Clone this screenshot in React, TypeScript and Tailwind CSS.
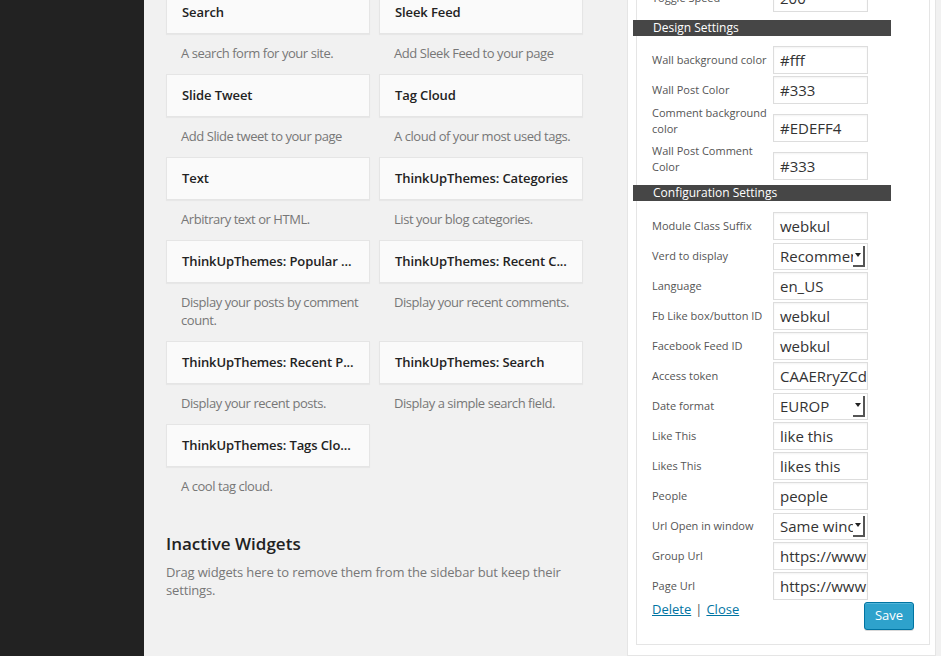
import React from "react";

type W = { t: string; d: string };
const rows: W[][] = [
  [
    { t: "Search", d: "A search form for your site." },
    { t: "Sleek Feed", d: "Add Sleek Feed to your page" },
  ],
  [
    { t: "Slide Tweet", d: "Add Slide tweet to your page" },
    { t: "Tag Cloud", d: "A cloud of your most used tags." },
  ],
  [
    { t: "Text", d: "Arbitrary text or HTML." },
    { t: "ThinkUpThemes: Categories", d: "List your blog categories." },
  ],
  [
    { t: "ThinkUpThemes: Popular ...", d: "Display your posts by comment count." },
    { t: "ThinkUpThemes: Recent C...", d: "Display your recent comments." },
  ],
  [
    { t: "ThinkUpThemes: Recent P...", d: "Display your recent posts." },
    { t: "ThinkUpThemes: Search", d: "Display a simple search field." },
  ],
  [{ t: "ThinkUpThemes: Tags Clo...", d: "A cool tag cloud." }],
];

function Widget({ w }: { w: W }) {
  return (
    <div>
      <div className="h-[43px] flex items-center px-[15px] bg-[#fafafa] border border-[#e5e5e5] shadow-[0_1px_1px_rgba(0,0,0,0.04)] text-[13px] font-semibold tracking-[-0.1px] text-[#222] whitespace-nowrap overflow-hidden">
        {w.t}
      </div>
      <div className="pt-[10px] pb-[12px] pl-[15px] pr-[8px] text-[13px] leading-[18px] tracking-[-0.45px] text-[#777]">
        {w.d}
      </div>
    </div>
  );
}

function Input({ v }: { v: string }) {
  return (
    <div className="w-[95px] h-[28px] border border-[#ddd] bg-white pl-[6px] flex items-center text-[15px] text-[#333] overflow-hidden whitespace-nowrap shadow-[inset_0_1px_2px_rgba(0,0,0,0.05)]">
      {v}
    </div>
  );
}

function Select({ v }: { v: string }) {
  return (
    <div className="relative w-[95px] h-[27px] border border-[#ddd] bg-white pl-[6px] flex items-center text-[15px] text-[#333] overflow-hidden whitespace-nowrap">
      <span className="block w-[80px] overflow-hidden">{v}</span>
      <div className="absolute right-[2px] top-[2px] w-[12px] h-[21px] bg-white border-r-2 border-b-2 border-[#555] flex justify-center pt-[7px]">
        <svg width="6" height="4" viewBox="0 0 6 4">
          <path d="M0 0 L6 0 L3 4 Z" fill="#222" />
        </svg>
      </div>
    </div>
  );
}

function Row({ label, children }: { label: string; children: React.ReactNode }) {
  return (
    <div className="h-[30px] flex items-center">
      <div className="w-[121px] text-[11px] text-[#555] whitespace-nowrap">{label}</div>
      {children}
    </div>
  );
}

function Row2({ label, v }: { label: React.ReactNode; v: string }) {
  return (
    <div className="h-[38px] flex items-start">
      <div className="w-[121px] text-[11px] leading-[16px] text-[#555]">{label}</div>
      <div className="mt-[9px]">
        <Input v={v} />
      </div>
    </div>
  );
}

function Bar({ t, className }: { t: string; className?: string }) {
  return (
    <div
      className={
        "ml-[-19px] w-[258px] h-[16px] bg-[#464646] text-white text-[12px] leading-[16px] pl-[20px] " +
        (className ?? "")
      }
    >
      {t}
    </div>
  );
}

export default function App() {
  return (
    <div
      className="w-[941px] h-[656px] overflow-hidden flex bg-[#f1f1f1]"
      style={{ fontFamily: '"Open Sans", "Noto Sans", sans-serif' }}
    >
      <div className="w-[144px] shrink-0 bg-[#222]" />
      <div className="w-[483px] shrink-0 pl-[22px]">
        <div className="mt-[-9px] grid grid-cols-[204px_204px] gap-x-[9px]">
          {rows.map((r, i) => (
            <React.Fragment key={i}>
              {r.map((w) => (
                <Widget key={w.t} w={w} />
              ))}
              {r.length === 1 && <div />}
            </React.Fragment>
          ))}
        </div>
        <h3 className="mt-[25px] text-[17px] leading-[24px] font-semibold text-[#222]">Inactive Widgets</h3>
        <p className="mt-[7px] w-[417px] text-[13px] leading-[18px] tracking-[-0.15px] text-[#777]">
          Drag widgets here to remove them from the sidebar but keep their settings.
        </p>
      </div>
      <div className="w-[309px] shrink-0 mt-[-39px] h-[695px] bg-white border border-t-0 border-[#e5e5e5] pl-[8px] pr-[5px]">
        <div className="bg-white border border-[#e5e5e5] px-[15px] pt-[21px] pb-[14px]">
          <Row label="Toggle Speed">
            <Input v="200" />
          </Row>
          <Bar t="Design Settings" className="mt-[7px]" />
          <div className="mt-[9px]">
            <Row label="Wall background color">
              <Input v="#fff" />
            </Row>
            <Row label="Wall Post Color">
              <Input v="#333" />
            </Row>
            <Row2 label={<>Comment background<br />color</>} v="#EDEFF4" />
            <Row2 label={<>Wall Post Comment<br />Color</>} v="#333" />
          </div>
          <Bar t="Configuration Settings" className="mt-[4px]" />
          <div className="mt-[10px]">
            <Row label="Module Class Suffix">
              <Input v="webkul" />
            </Row>
            <Row label="Verd to display">
              <Select v="Recommend" />
            </Row>
            <Row label="Language">
              <Input v="en_US" />
            </Row>
            <Row label="Fb Like box/button ID">
              <Input v="webkul" />
            </Row>
            <Row label="Facebook Feed ID">
              <Input v="webkul" />
            </Row>
            <Row label="Access token">
              <Input v="CAAERryZCd" />
            </Row>
            <Row label="Date format">
              <Select v="EUROP" />
            </Row>
            <Row label="Like This">
              <Input v="like this" />
            </Row>
            <Row label="Likes This">
              <Input v="likes this" />
            </Row>
            <Row label="People">
              <Input v="people" />
            </Row>
            <Row label="Url Open in window">
              <Select v="Same window" />
            </Row>
            <Row label="Group Url">
              <Input v="https://www.facebook.com" />
            </Row>
            <Row label="Page Url">
              <Input v="https://www.facebook.com" />
            </Row>
          </div>
          <div className="flex justify-between items-start">
            <div className="text-[13px] leading-[16px] text-[#555]">
              <a className="text-[#0074a2] underline cursor-pointer">Delete</a>
              <span className="mx-[4px]">|</span>
              <a className="text-[#0074a2] underline cursor-pointer">Close</a>
            </div>
            <button className="mt-[1px] w-[50px] h-[28px] rounded-[3px] bg-[#2ea2cc] border border-[#0074a2] text-white text-[13px] shadow-[inset_0_1px_0_rgba(120,200,230,0.5),0_1px_0_rgba(0,0,0,0.15)]">
              Save
            </button>
          </div>
        </div>
      </div>
    </div>
  );
}
